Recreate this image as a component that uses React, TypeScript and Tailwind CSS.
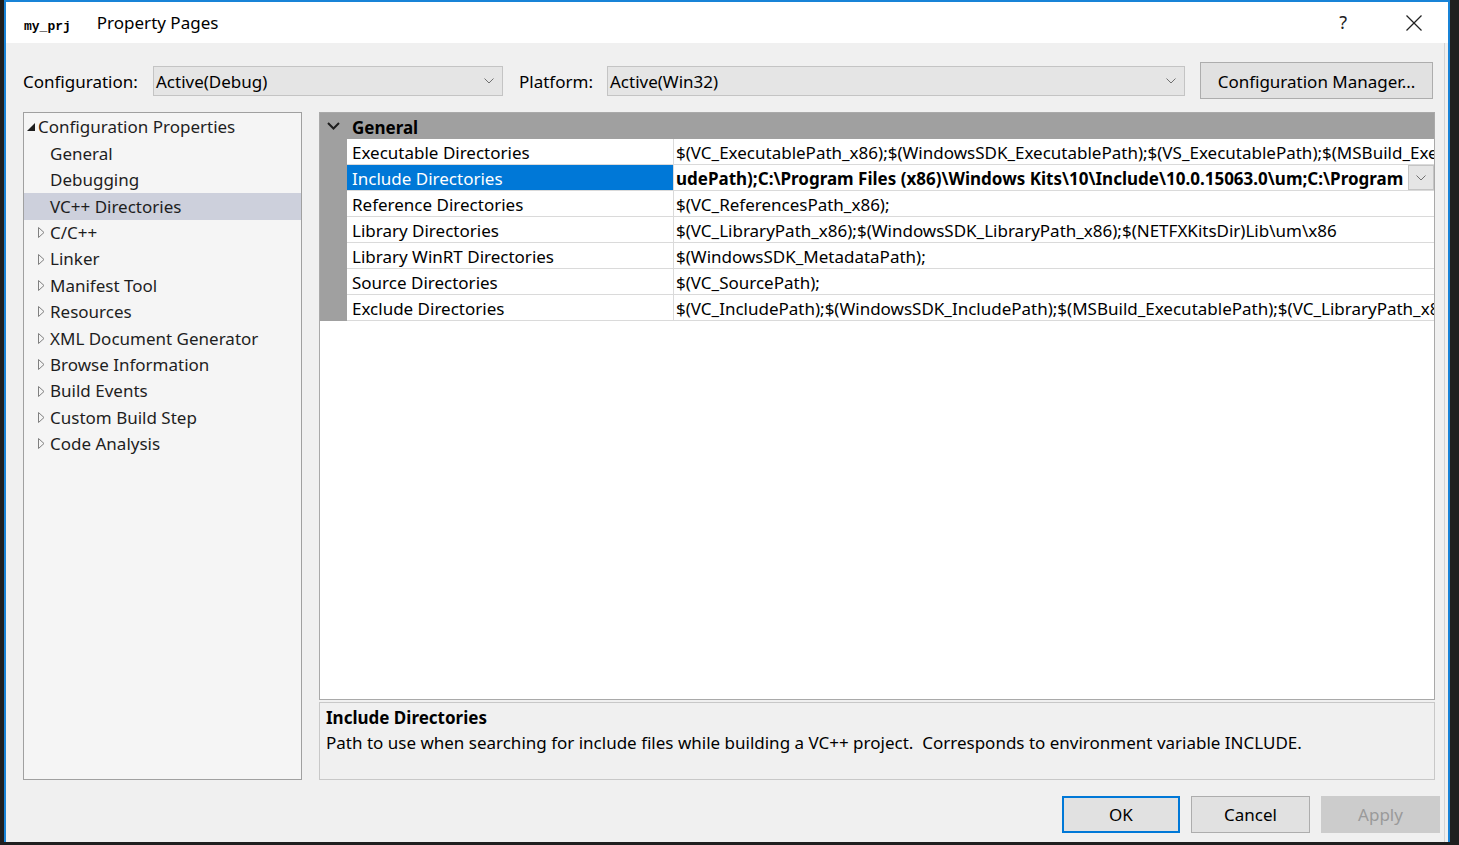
import React from "react";

const treeItems: { label: string; level: 0 | 1 | 2; kind: "open" | "leaf" | "closed" }[] = [
    { label: "Configuration Properties", level: 0, kind: "open" },
    { label: "General", level: 1, kind: "leaf" },
    { label: "Debugging", level: 1, kind: "leaf" },
    { label: "VC++ Directories", level: 1, kind: "leaf" },
    { label: "C/C++", level: 1, kind: "closed" },
    { label: "Linker", level: 1, kind: "closed" },
    { label: "Manifest Tool", level: 1, kind: "closed" },
    { label: "Resources", level: 1, kind: "closed" },
    { label: "XML Document Generator", level: 1, kind: "closed" },
    { label: "Browse Information", level: 1, kind: "closed" },
    { label: "Build Events", level: 1, kind: "closed" },
    { label: "Custom Build Step", level: 1, kind: "closed" },
    { label: "Code Analysis", level: 1, kind: "closed" },
];

const rows = [
    {
        name: "Executable Directories",
        value: "$(VC_ExecutablePath_x86);$(WindowsSDK_ExecutablePath);$(VS_ExecutablePath);$(MSBuild_ExecutablePath);$(SystemRoot)\\SysWow64;$(FxCopDir);$(PATH);",
    },
    {
        name: "Include Directories",
        value: "udePath);C:\\Program Files (x86)\\Windows Kits\\10\\Include\\10.0.15063.0\\um;C:\\Program Files (x86)\\Windows Kits\\10\\Include",
    },
    { name: "Reference Directories", value: "$(VC_ReferencesPath_x86);" },
    {
        name: "Library Directories",
        value: "$(VC_LibraryPath_x86);$(WindowsSDK_LibraryPath_x86);$(NETFXKitsDir)Lib\\um\\x86",
    },
    { name: "Library WinRT Directories", value: "$(WindowsSDK_MetadataPath);" },
    { name: "Source Directories", value: "$(VC_SourcePath);" },
    {
        name: "Exclude Directories",
        value: "$(VC_IncludePath);$(WindowsSDK_IncludePath);$(MSBuild_ExecutablePath);$(VC_LibraryPath_x86);",
    },
];

// thin combo box chevron
function Chevron() {
    return (
        <svg width="10" height="6" viewBox="0 0 10 6">
            <polyline points="0.5,0.5 5,5 9.5,0.5" fill="none" stroke="#707070" strokeWidth="1" />
        </svg>
    );
}

function ComboBox({ text, width }: { text: string; width: string }) {
    return (
        <div
            className={`${width} h-[30px] bg-[#e5e5e5] border border-[#c4c4c4] flex items-center justify-between pl-[2px] pr-[8px]`}
        >
            <span className="text-[17px] text-black pt-[2px]">{text}</span>
            <Chevron />
        </div>
    );
}

function TreeRow({ label, level, kind, selected }: { label: string; level: number; kind: string; selected: boolean }) {
    return (
        <div className={`h-[26.4px] flex items-center ${selected ? "bg-[#cdd0dc]" : ""}`}>
            {level === 0 ? (
                <div className="w-[14px] pl-[3px] flex items-center">
                    <svg width="8" height="8" viewBox="0 0 8 8">
                        <polygon points="8,0 8,8 0,8" fill="#1e1e1e" />
                    </svg>
                </div>
            ) : (
                <div className="w-[26px] pl-[14px] flex items-center">
                    {kind === "closed" && (
                        <svg width="7" height="11" viewBox="0 0 7 11">
                            <polygon points="0.5,0.5 6,5.5 0.5,10.5" fill="none" stroke="#808080" strokeWidth="1" />
                        </svg>
                    )}
                </div>
            )}
            <span className="text-[17px] text-[#1e1e1e] whitespace-nowrap">{label}</span>
        </div>
    );
}

export default function App() {
    return (
        <div
            className="w-[1459px] h-[845px] bg-[#1f1f1f] flex overflow-hidden"
            style={{ fontFamily: '"Noto Sans", "Open Sans", sans-serif' }}
        >
            <div className="w-[4px] shrink-0" />
            <div className="w-[1446px] h-[842px] shrink-0 border-x-2 border-t-2 border-[#1883d7] flex flex-col bg-[#f0f0f0]">
                {/* Title bar */}
                <div className="h-[41px] bg-white flex items-center">
                    <span
                        className="ml-[18px] mt-[8px] text-[13px] font-bold text-black"
                        style={{ fontFamily: '"Liberation Mono", monospace' }}
                    >
                        my_prj
                    </span>
                    <span className="ml-[26px] text-[17px] text-black">Property Pages</span>
                    <div className="flex-1" />
                    <span className="text-[18px] text-[#222] mr-[59px]">?</span>
                    <svg width="16" height="16" viewBox="0 0 16 16" className="mr-[26px]">
                        <line x1="0.5" y1="0.5" x2="15.5" y2="15.5" stroke="#222" strokeWidth="1.2" />
                        <line x1="15.5" y1="0.5" x2="0.5" y2="15.5" stroke="#222" strokeWidth="1.2" />
                    </svg>
                </div>

                {/* Body */}
                <div className="flex-1 flex pr-[3px]">
                    <div className="flex-1 border-r border-[#d4d4d4] flex flex-col pl-[17px]">
                        {/* Configuration / Platform row */}
                        <div className="mt-[19px] h-[37px] flex items-center">
                            <span className="w-[130px] text-[17px] text-black pt-[2px]">Configuration:</span>
                            <ComboBox text="Active(Debug)" width="w-[350px]" />
                            <span className="ml-[16px] w-[88px] text-[17px] text-black pt-[2px]">Platform:</span>
                            <ComboBox text="Active(Win32)" width="w-[578px]" />
                            <button className="ml-[15px] w-[233px] h-[37px] bg-[#e1e1e1] border border-[#adadad] text-[17px] text-black pt-[2px]">
                                Configuration Manager...
                            </button>
                        </div>

                        {/* Main area */}
                        <div className="mt-[13px] flex gap-[17px]">
                            {/* Tree */}
                            <div className="w-[279px] h-[668px] bg-[#f5f5f5] border border-[#a0a0a0] pt-[1px]">
                                {treeItems.map((t) => (
                                    <TreeRow
                                        key={t.label}
                                        label={t.label}
                                        level={t.level}
                                        kind={t.kind}
                                        selected={t.label === "VC++ Directories"}
                                    />
                                ))}
                            </div>

                            {/* Property grid + description */}
                            <div className="w-[1116px] flex flex-col">
                                <div className="h-[588px] bg-white border border-[#a9a9a9] flex flex-col">
                                    {/* Category header */}
                                    <div className="h-[26px] bg-[#a0a0a0] flex items-center">
                                        <div className="w-[27px] flex justify-center">
                                            <svg width="13" height="8" viewBox="0 0 13 8">
                                                <polyline
                                                    points="1,1 6.5,6.5 12,1"
                                                    fill="none"
                                                    stroke="#1e1e1e"
                                                    strokeWidth="2"
                                                />
                                            </svg>
                                        </div>
                                        <span className="ml-[5px] pt-[3px] text-[17px] font-bold text-black">General</span>
                                    </div>
                                    {rows.map((r, i) => {
                                        const selected = i === 1;
                                        return (
                                            <div key={r.name} className="h-[26px] flex">
                                                <div className="w-[27px] bg-[#a0a0a0] shrink-0" />
                                                <div
                                                    className={`w-[327px] shrink-0 flex items-center pl-[5px] pt-[2px] border-b border-r border-[#dadada] ${
                                                        selected ? "bg-[#0078d7] text-white" : "text-black"
                                                    }`}
                                                >
                                                    <span className="text-[17px] whitespace-nowrap">{r.name}</span>
                                                </div>
                                                <div className="flex-1 min-w-0 flex items-center border-b border-[#dadada]">
                                                    <div className="flex-1 min-w-0 overflow-hidden pl-[2px] pt-[2px]">
                                                        <span
                                                            className={`text-[17px] whitespace-nowrap text-black ${
                                                                selected ? "font-bold" : ""
                                                            }`}
                                                        >
                                                            {r.value}
                                                        </span>
                                                    </div>
                                                    {selected && (
                                                        <div className="w-[26px] h-[25px] shrink-0 bg-[#e5e5e5] border border-[#c4c4c4] flex items-center justify-center">
                                                            <Chevron />
                                                        </div>
                                                    )}
                                                </div>
                                            </div>
                                        );
                                    })}
                                </div>
                                <div className="mt-[2px] h-[78px] border border-[#c8c8c8] px-[6px] pt-[3px]">
                                    <div className="text-[17px] font-bold text-black leading-[24px]">Include Directories</div>
                                    <div className="text-[17px] text-black leading-[26px] whitespace-pre">
                                        {"Path to use when searching for include files while building a VC++ project.  Corresponds to environment variable INCLUDE."}
                                    </div>
                                </div>
                            </div>
                        </div>

                        {/* Dialog buttons */}
                        <div className="mt-[16px] flex justify-end gap-[11px] pr-[4px]">
                            <button className="w-[118px] h-[37px] bg-[#e1e1e1] border-2 border-[#0078d7] text-[17px] text-black">
                                OK
                            </button>
                            <button className="w-[119px] h-[37px] bg-[#e1e1e1] border border-[#adadad] text-[17px] text-black">
                                Cancel
                            </button>
                            <button className="w-[119px] h-[37px] bg-[#cccccc] border border-[#cccccc] text-[17px] text-[#9a9a9a]">
                                Apply
                            </button>
                        </div>
                    </div>
                </div>
            </div>
            <div className="flex-1" />
        </div>
    );
}
